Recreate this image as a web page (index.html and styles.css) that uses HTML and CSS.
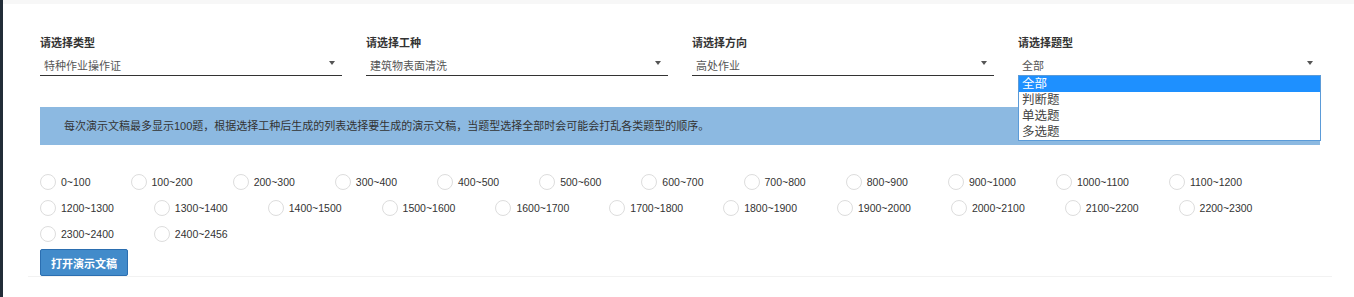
FILE: index.html
```html
<!DOCTYPE html>
<html lang="zh-CN">
<head>
    <meta charset="UTF-8">
    <title>演示文稿</title>
    <link rel="stylesheet" href="styles.css">
</head>
<body>
    <div class="side-strip"></div>
    <div class="main">
        <div class="top-band"></div>
        <div class="panel">
            <div class="select-row">
                <div class="field">
                    <div class="field-label">请选择类型</div>
                    <div class="select"><span>特种作业操作证</span><i class="caret"></i></div>
                </div>
                <div class="field">
                    <div class="field-label">请选择工种</div>
                    <div class="select"><span>建筑物表面清洗</span><i class="caret"></i></div>
                </div>
                <div class="field">
                    <div class="field-label">请选择方向</div>
                    <div class="select"><span>高处作业</span><i class="caret"></i></div>
                </div>
                <div class="field">
                    <div class="field-label">请选择题型</div>
                    <div class="select open"><span>全部</span><i class="caret"></i></div>
                    <ul class="dropdown">
                        <li class="selected">全部</li>
                        <li>判断题</li>
                        <li>单选题</li>
                        <li>多选题</li>
                    </ul>
                </div>
            </div>

            <div class="alert">每次演示文稿最多显示100题，根据选择工种后生成的列表选择要生成的演示文稿，当题型选择全部时会可能会打乱各类题型的顺序。</div>

            <div class="range-list">
                <label class="range"><input type="radio" name="range"><span>0~100</span></label>
                <label class="range"><input type="radio" name="range"><span>100~200</span></label>
                <label class="range"><input type="radio" name="range"><span>200~300</span></label>
                <label class="range"><input type="radio" name="range"><span>300~400</span></label>
                <label class="range"><input type="radio" name="range"><span>400~500</span></label>
                <label class="range"><input type="radio" name="range"><span>500~600</span></label>
                <label class="range"><input type="radio" name="range"><span>600~700</span></label>
                <label class="range"><input type="radio" name="range"><span>700~800</span></label>
                <label class="range"><input type="radio" name="range"><span>800~900</span></label>
                <label class="range"><input type="radio" name="range"><span>900~1000</span></label>
                <label class="range"><input type="radio" name="range"><span>1000~1100</span></label>
                <label class="range"><input type="radio" name="range"><span>1100~1200</span></label>
                <label class="range"><input type="radio" name="range"><span>1200~1300</span></label>
                <label class="range"><input type="radio" name="range"><span>1300~1400</span></label>
                <label class="range"><input type="radio" name="range"><span>1400~1500</span></label>
                <label class="range"><input type="radio" name="range"><span>1500~1600</span></label>
                <label class="range"><input type="radio" name="range"><span>1600~1700</span></label>
                <label class="range"><input type="radio" name="range"><span>1700~1800</span></label>
                <label class="range"><input type="radio" name="range"><span>1800~1900</span></label>
                <label class="range"><input type="radio" name="range"><span>1900~2000</span></label>
                <label class="range"><input type="radio" name="range"><span>2000~2100</span></label>
                <label class="range"><input type="radio" name="range"><span>2100~2200</span></label>
                <label class="range"><input type="radio" name="range"><span>2200~2300</span></label>
                <label class="range"><input type="radio" name="range"><span>2300~2400</span></label>
                <label class="range"><input type="radio" name="range"><span>2400~2456</span></label>
            </div>

            <button class="open-button">打开演示文稿</button>
        </div>
    </div>
</body>
</html>
```

FILE: styles.css
```css
body {
    margin: 0;
    display: flex;
    min-height: 297px;
    font-family: "Liberation Sans", "Noto Sans CJK SC", sans-serif;
    font-size: 11px;
    color: #333;
    background-color: #fff;
}

.side-strip {
    width: 3px;
    flex-shrink: 0;
    background-color: #222d38;
}

.main {
    flex: 1;
}

.top-band {
    height: 4px;
    background-color: #f7f7f7;
}

.panel {
    margin: 0 22px 0 25px;
    padding: 32px 12px 0;
    border-bottom: 1px solid #f2f2f2;
}

.select-row {
    display: flex;
    gap: 24px;
}

.field {
    flex: 1;
    position: relative;
}

.field-label {
    font-weight: bold;
    line-height: 14px;
    margin-bottom: 5px;
}

.select {
    display: flex;
    justify-content: space-between;
    align-items: center;
    height: 20px;
    padding: 0 7px 0 4px;
    border-bottom: 1px solid #333;
    color: #555;
}

.select.open {
    border-bottom-color: transparent;
}

.caret {
    width: 0;
    height: 0;
    border-left: 3px solid transparent;
    border-right: 3px solid transparent;
    border-top: 4px solid #555;
    margin-top: -4px;
}

.dropdown {
    position: absolute;
    top: 39px;
    left: 0;
    right: -1px;
    margin: 0;
    padding: 0;
    list-style: none;
    background-color: #fff;
    border: 1px solid #5b9bd8;
    font-size: 12.5px;
    z-index: 2;
}

.dropdown li {
    line-height: 16px;
    padding: 0 3px;
    color: #444;
}

.dropdown li.selected {
    background-color: #1e90ff;
    color: #fff;
}

.alert {
    margin-top: 31px;
    height: 38px;
    line-height: 38px;
    padding: 0 24px;
    background-color: #8cb9e1;
}

.range-list {
    display: flex;
    flex-wrap: wrap;
    column-gap: 40px;
    margin-top: 24px;
}

.range {
    display: flex;
    align-items: center;
    gap: 5px;
    height: 26px;
    font-size: 10.5px;
}

.range input {
    appearance: none;
    margin: 0;
    width: 16px;
    height: 16px;
    border: 1px solid #ddd;
    border-radius: 50%;
    background-color: #fff;
}

.open-button {
    display: block;
    margin-top: 2px;
    height: 27px;
    padding: 0 10px;
    font-family: inherit;
    font-size: 11px;
    font-weight: bold;
    color: #fff;
    background-color: #428bca;
    border: 1px solid #2b6eb0;
    border-radius: 2px;
}
```
